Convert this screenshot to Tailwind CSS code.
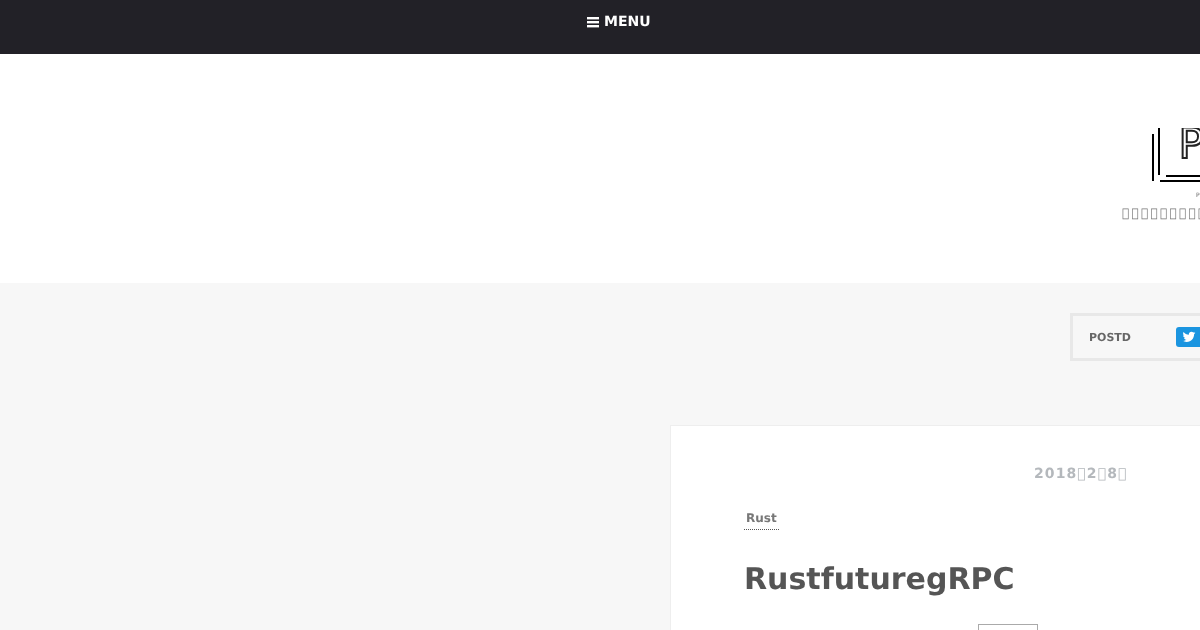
<!doctype html>
<html>
<head>
    <meta charset="UTF-8" />
    <script src="https://cdn.jsdelivr.net/npm/@tailwindcss/browser@4"></script>
    <title>POSTD</title>
</head>
<body class="h-[630px] overflow-hidden bg-[#f7f7f7] font-['DejaVu_Sans',sans-serif] antialiased [text-rendering:geometricPrecision]">
    <nav class="h-[54px] bg-[#222127] pl-[587px] pt-[14px]">
        <a href="#" class="flex items-center gap-[5px] text-[14px] leading-[17px] font-bold text-white [will-change:transform]">
            <svg class="h-[12px] w-[12px]" viewBox="0 0 12 12" fill="currentColor">
                <rect x="0" y="0" width="12" height="2.400" />
                <rect x="0" y="4" width="12" height="2.400" />
                <rect x="0" y="8" width="12" height="2.400" />
            </svg>
            MENU
        </a>
    </nav>

    <header class="h-[229px] overflow-hidden bg-white pl-[1122px] pt-[74px]">
        <div class="w-[300px]">
            <svg class="ml-[30px] block [will-change:transform]" width="120" height="70" viewBox="0 0 120 70">
                <rect x="0" y="6" width="2" height="47" fill="#000" />
                <rect x="6" y="0" width="2" height="47" fill="#000" />
                <rect x="14" y="47" width="106" height="2" fill="#000" />
                <rect x="8" y="52" width="112" height="2" fill="#000" />
                <text x="26.500" y="30" font-size="42" font-family="DejaVu Sans" fill="none" stroke="#222" stroke-width="2">P</text>
                <text x="44" y="69" font-size="6" font-family="DejaVu Sans" fill="#666">P</text>
            </svg>
            <p class="mt-[7px] whitespace-nowrap text-[12px] leading-[16px] tracking-[2.300px] text-[#777] [will-change:transform]">&#xE000;&#xE000;&#xE000;&#xE000;&#xE000;&#xE000;&#xE000;&#xE000;&#xE000;&#xE000;</p>
        </div>
    </header>

    <main class="pt-[30px]">
        <div class="ml-[1070px] flex h-[48px] w-[300px] items-center border-[3px] border-[#e8e8e8] pl-[16px]">
            <span class="w-[87px] pt-[2px] text-[11px] font-bold text-[#666] [will-change:transform]">POSTD</span>
            <span class="flex h-[20px] w-[26px] items-center justify-center rounded-[3px] bg-[#1b95e0]">
                <svg class="h-[14px] w-[14px]" viewBox="0 0 24 24" fill="#fff">
                    <path d="M23 4.900c-.8.4-1.700.6-2.600.7.9-.6 1.600-1.400 2-2.500-.9.5-1.800.9-2.900 1.100C18.700 3.300 17.500 2.800 16.200 2.800c-2.500 0-4.500 2-4.500 4.500 0 .4 0 .7.1 1C8 8.100 4.700 6.300 2.500 3.600c-.4.700-.6 1.400-.6 2.300 0 1.600.8 3 2 3.800-.7 0-1.400-.2-2-.6v.1c0 2.200 1.600 4 3.600 4.400-.4.1-.8.2-1.200.2-.3 0-.6 0-.8-.1.6 1.800 2.200 3.100 4.200 3.100-1.500 1.200-3.500 1.900-5.600 1.900-.4 0-.7 0-1.100-.1 2 1.300 4.400 2 6.900 2 8.300 0 12.800-6.900 12.800-12.800v-.6c.9-.6 1.700-1.400 2.300-2.300z" />
                </svg>
            </span>
        </div>

        <article class="mt-[64px] ml-[670px] h-[300px] w-[700px] border border-[#eeeeee] bg-white pt-[38px] pl-[73px]">
            <p class="ml-[290px] text-[14px] leading-[20px] font-bold tracking-[1.100px] text-[#b4b8bc] [will-change:transform]">2018&#xE000;2&#xE000;8&#xE000;</p>
            <a href="#" class="mt-[26px] inline-block border-b border-dotted border-[#555] px-[2px] pb-[2px] text-[12px] leading-[17px] font-bold text-[#777] [will-change:transform]">Rust</a>
            <h1 class="mt-[28px] text-[30px] leading-[44px] font-bold text-[#555] [will-change:transform]">RustfuturegRPC</h1>
            <div class="mt-[22px] ml-[234px] h-[20px] w-[60px] border border-[#aaa] bg-white"></div>
        </article>
    </main>
</body>
</html>
